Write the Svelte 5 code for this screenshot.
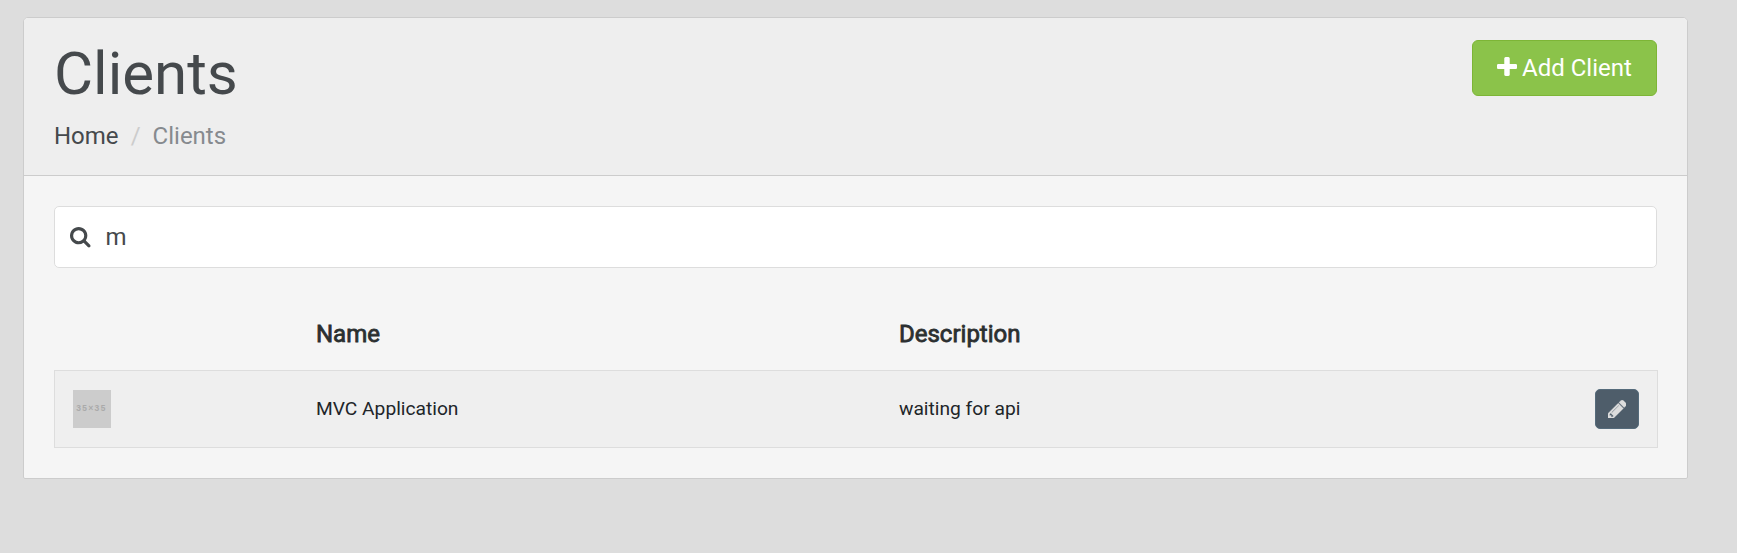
<script>
  const query = 'm';
  const clients = [{ name: 'MVC Application', description: 'waiting for api' }];
</script>

<main class="panel">
  <header>
    <div>
      <h1>Clients</h1>
      <nav><span>Home</span><span class="slash">/</span><span class="current">Clients</span></nav>
    </div>
    <button class="add">
      <svg class="plus" viewBox="192 128 1408 1408" preserveAspectRatio="none"><path fill="currentColor" d="M1600 736v192q0 40-28 68t-68 28h-416v416q0 40-28 68t-68 28h-192q-40 0-68-28t-28-68v-416h-416q-40 0-68-28t-28-68v-192q0-40 28-68t68-28h416v-416q0-40 28-68t68-28h192q40 0 68 28t28 68v416h416q40 0 68 28t28 68z" /></svg>
      <span>Add Client</span>
    </button>
  </header>
  <section>
    <div class="search">
      <svg viewBox="64 128 1664 1664"><path fill="currentColor" d="M1216 832q0-185-131.5-316.5t-316.5-131.5-316.5 131.5-131.5 316.5 131.5 316.5 316.5 131.5 316.5-131.5 131.5-316.5zm512 832q0 52-38 90t-90 38q-54 0-90-38l-343-342q-179 124-399 124-143 0-273.5-55.5t-225-150-150-225-55.5-273.5 55.5-273.5 150-225 225-150 273.5-55.5 273.5 55.5 225 150 150 225 55.5 273.5q0 220-124 399l343 343q37 37 37 90z" /></svg>
      <span>{query}</span>
    </div>
    <div class="head grid"><span></span><span>Name</span><span>Description</span><span></span></div>
    {#each clients as client}
      <div class="row grid">
        <div class="avatar"><span>35×35</span></div>
        <span class="cell">{client.name}</span>
        <span class="cell">{client.description}</span>
        <button class="edit" aria-label="Edit">
          <svg viewBox="128 149 1515 1515"><path fill="currentColor" stroke="currentColor" stroke-width="30" d="M491 1536l91-91-235-235-91 91v107h128v128h107zm523-928q0-22-22-22-10 0-17 7l-542 542q-7 7-7 17 0 22 22 22 10 0 17-7l542-542q7-7 7-17zm-54-192l416 416-832 832h-416v-416zm683 96q0 53-37 90l-166 166-416-416 166-165q36-38 90-38 53 0 91 38l235 234q37 39 37 91z" /></svg>
        </button>
      </div>
    {/each}
  </section>
</main>

<style>
  :global(body) { background: #ddd; }
  :global(#app) { display: flow-root; }
  .panel {
    box-sizing: border-box;
    width: 1665px;
    height: 462px;
    margin: 17px 0 0 23px;
    border: 1px solid #ccc;
    border-radius: 5px 5px 2px 2px;
    background: #f5f5f5;
    overflow: hidden;
    font-family: Roboto, sans-serif;
    font-size: 24px;
    color: #45494c;
  }
  header {
    box-sizing: border-box;
    height: 158px;
    padding: 22px 30px 0;
    border-bottom: 1px solid #ccc;
    background: #eee;
    display: flex;
    justify-content: space-between;
    align-items: flex-start;
  }
  h1 { margin: 0; padding-top: 1px; font-size: 60px; line-height: 66px; font-weight: 400; }
  nav { display: flex; margin-top: 12px; line-height: 34px; }
  .slash { width: 34px; text-align: center; color: #ccc; }
  .current { color: #868a8e; }
  button { box-sizing: border-box; font: inherit; display: flex; align-items: center; padding: 0; }
  .add {
    width: 185px;
    height: 56px;
    padding-left: 24px;
    gap: 5px;
    border: 1px solid #7db536;
    border-radius: 6px;
    background: #8bc34a;
    color: #fff;
  }
  .plus { width: 20px; height: 19px; margin-bottom: 3px; }
  section { padding: 30px 30px 0; }
  .search {
    box-sizing: border-box;
    height: 62px;
    padding-left: 15px;
    display: flex;
    align-items: center;
    gap: 15px;
    border: 1px solid #ddd;
    border-radius: 5px;
    background: #fff;
  }
  .search svg { width: 20.5px; height: 20.5px; margin-top: 1px; }
  .grid { display: grid; grid-template-columns: 243px 583px 1fr 44px; align-items: center; padding: 0 18px; color: #212529; }
  .head { height: 102px; padding: 0 19px; box-sizing: border-box; color: #2b2f30; -webkit-text-stroke: 0.8px #2b2f30; }
  .head span { padding-top: 30px; }
  .row { box-sizing: border-box; height: 78px; margin-right: -1px; border: 1px solid #ddd; background: #efefef; font-size: 19.2px; }
  .cell { padding-bottom: 1px; }
  .avatar { width: 38px; height: 38px; background: #ccc; color: #aaa; display: flex; align-items: center; padding-left: 3px; box-sizing: border-box; }
  .avatar span { font: 700 8.5px/10px "Liberation Mono", monospace; letter-spacing: 1px; }
  .edit { width: 44px; height: 40px; justify-content: center; border: 1px solid #556b7b; border-radius: 5px; background: #4e5d6a; color: #ddd; }
  .edit svg { width: 18.6px; height: 18.6px; }
</style>
